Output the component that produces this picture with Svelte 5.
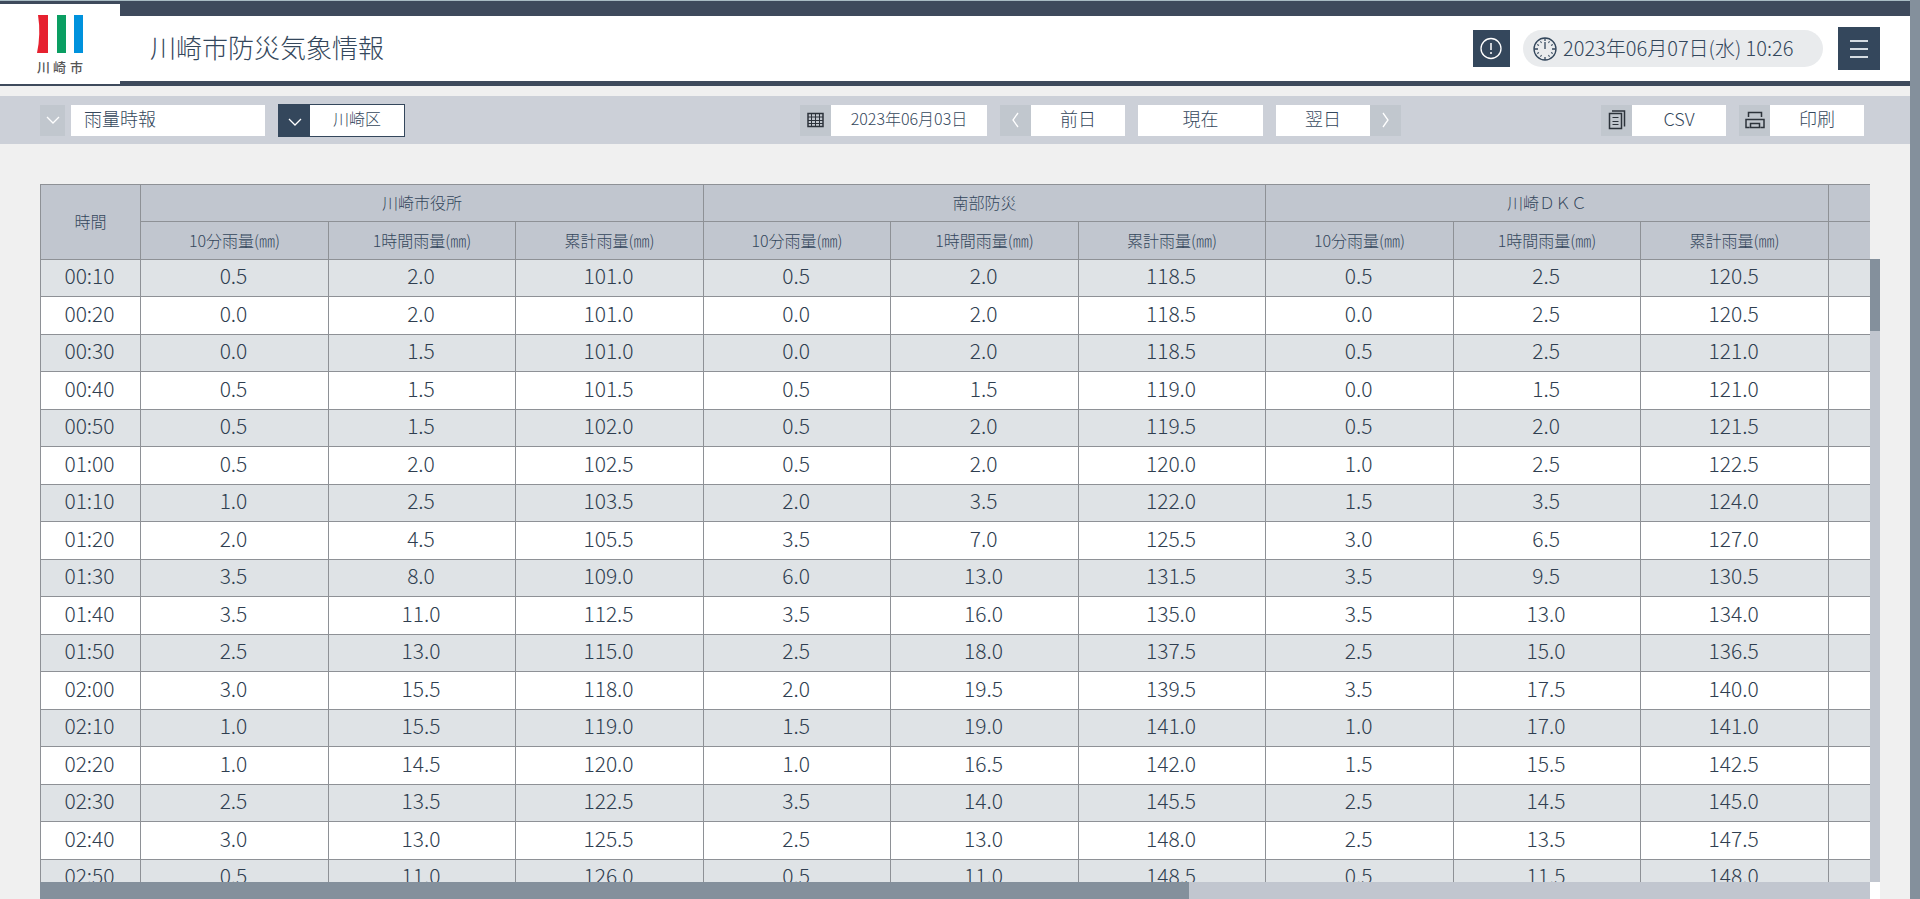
<script>
  let report = "雨量時報";
  let ward = "川崎区";
  let date = "2023年06月03日";

  const stations = ["川崎市役所", "南部防災", "川崎ＤＫＣ"];
  const measures = ["10分雨量(㎜)", "1時間雨量(㎜)", "累計雨量(㎜)"];

  const rows = `
00:10 0.5 2.0 101.0 0.5 2.0 118.5 0.5 2.5 120.5
00:20 0.0 2.0 101.0 0.0 2.0 118.5 0.0 2.5 120.5
00:30 0.0 1.5 101.0 0.0 2.0 118.5 0.5 2.5 121.0
00:40 0.5 1.5 101.5 0.5 1.5 119.0 0.0 1.5 121.0
00:50 0.5 1.5 102.0 0.5 2.0 119.5 0.5 2.0 121.5
01:00 0.5 2.0 102.5 0.5 2.0 120.0 1.0 2.5 122.5
01:10 1.0 2.5 103.5 2.0 3.5 122.0 1.5 3.5 124.0
01:20 2.0 4.5 105.5 3.5 7.0 125.5 3.0 6.5 127.0
01:30 3.5 8.0 109.0 6.0 13.0 131.5 3.5 9.5 130.5
01:40 3.5 11.0 112.5 3.5 16.0 135.0 3.5 13.0 134.0
01:50 2.5 13.0 115.0 2.5 18.0 137.5 2.5 15.0 136.5
02:00 3.0 15.5 118.0 2.0 19.5 139.5 3.5 17.5 140.0
02:10 1.0 15.5 119.0 1.5 19.0 141.0 1.0 17.0 141.0
02:20 1.0 14.5 120.0 1.0 16.5 142.0 1.5 15.5 142.5
02:30 2.5 13.5 122.5 3.5 14.0 145.5 2.5 14.5 145.0
02:40 3.0 13.0 125.5 2.5 13.0 148.0 2.5 13.5 147.5
02:50 0.5 11.0 126.0 0.5 11.0 148.5 0.5 11.5 148.0
`
    .trim()
    .split("\n")
    .map((line) => line.split(" "));

  // minute marks of the clock, skipping the quarters
  const ticks = [30, 60, 120, 150, 210, 240, 300, 330];
</script>

<div class="page">
  <header>
    <a class="logo" href="#top" aria-label="川崎市">
      <svg width="50" height="62" viewBox="0 0 50 62">
        <path d="M3 1H13V39H2Q6 20 3 1Z" fill="#e6212f" />
        <rect x="22" y="1" width="9" height="38" fill="#0a9e62" />
        <rect x="39" y="1" width="9" height="38" fill="#0092dd" />
        <text x="2 18 35" y="58">川崎市</text>
      </svg>
    </a>
    <div class="bar">
      <h1>川崎市防災気象情報</h1>
      <button class="alert" aria-label="alert">
        <svg width="23" height="23" viewBox="0 0 23 23" fill="none" stroke="#fff">
          <circle cx="11" cy="11.5" r="10" stroke-width="1.3" />
          <path d="M11 6v7M11 15v2" stroke-width="1.5" />
        </svg>
      </button>
      <div class="clock">
        <svg width="24" height="24" viewBox="0 0 24 24" fill="none" stroke="#34475c">
          <circle cx="12" cy="12" r="11" stroke-width="1.3" />
          <path d="M12 5v7M12 1v3M12 20v3M1 12h4M19 12h4" stroke-width="1.3" />
          {#each ticks as deg}
            <path d="M12 3v2" transform="rotate({deg} 12 12)" />
          {/each}
        </svg>
        <span>2023年06月07日(水) 10:26</span>
      </div>
      <button class="menu" aria-label="menu"><i></i><i></i><i></i></button>
    </div>
  </header>

  <div class="toolbar">
    <label class="report">
      <span class="icon">
        <svg width="14" height="9" viewBox="0 0 14 9"><path d="M1 1l6 6 6-6" /></svg>
      </span>
      <select bind:value={report} aria-label="帳票">
        <option>雨量時報</option>
      </select>
    </label>
    <label class="ward">
      <span class="icon">
        <svg width="14" height="9" viewBox="0 0 14 9"><path d="M1 1l6 6 6-6" /></svg>
      </span>
      <select bind:value={ward} aria-label="区">
        <option>川崎区</option>
      </select>
    </label>

    <div class="days">
      <label class="date">
        <span class="icon">
          <svg width="17" height="16" viewBox="0 0 17 16" class="dark">
            <path d="M1 1.500h15v13H1z" />
            <path d="M1 5h15M1 8.500h15M1 11.500h15M4.500 2v13M8.500 2v13M12.500 2v13" class="thin" />
          </svg>
        </span>
        <input type="text" bind:value={date} aria-label="日付" />
      </label>
      <button class="tool">
        <span class="icon">
          <svg width="9" height="16" viewBox="0 0 9 16"><path d="M7 1L2 8l5 7" /></svg>
        </span>
        <span class="text">前日</span>
      </button>
      <button class="tool now"><span class="text">現在</span></button>
      <button class="tool">
        <span class="text">翌日</span>
        <span class="icon">
          <svg width="9" height="16" viewBox="0 0 9 16"><path d="M2 1l5 7-5 7" /></svg>
        </span>
      </button>
    </div>

    <div class="output">
      <button class="tool">
        <span class="icon">
          <svg width="18" height="20" viewBox="0 0 18 20" class="dark">
            <path d="M1.500 3.500h12v15h-12zM4 1h12.500v15.500" />
            <path d="M4.500 7.500h6M4.500 11.500h6M4.500 14.500h6" class="thin" />
          </svg>
        </span>
        <span class="text">CSV</span>
      </button>
      <button class="tool">
        <span class="icon">
          <svg width="20" height="18" viewBox="0 0 20 18" class="dark">
            <path d="M3.500 6V1.500h13V6M4.500 16.500h-3.500v-8h18v8h-3.500M5.500 12.500h9v4h-9z" />
          </svg>
        </span>
        <span class="text">印刷</span>
      </button>
    </div>
  </div>

  <main>
    <div class="sheet">
      <table>
        <colgroup>
          <col class="time" />
          {#each rows[0].slice(1) as _, i}
            <col class={i % 2 ? "odd" : "even"} />
          {/each}
          <col />
        </colgroup>
        <thead>
          <tr>
            <th rowspan="2">時間</th>
            {#each stations as station}
              <th colspan="3">{station}</th>
            {/each}
            <th></th>
          </tr>
          <tr>
            {#each stations as _}
              {#each measures as measure}
                <th>{measure}</th>
              {/each}
            {/each}
            <th></th>
          </tr>
        </thead>
        <tbody>
          {#each rows as row}
            <tr>
              {#each row as cell}
                <td>{cell}</td>
              {/each}
              <td></td>
            </tr>
          {/each}
        </tbody>
      </table>
    </div>
    <div class="vbar"><div class="thumb"></div></div>
    <div class="hbar"><div class="thumb"></div></div>
    <div class="corner"></div>
  </main>
</div>

<style>
  :global(body) {
    background: #f0f0f0;
    overflow: hidden;
  }

  * {
    box-sizing: border-box;
  }

  .page {
    height: 100vh;
    display: flex;
    flex-direction: column;
    border-right: 10px solid #84909c;
    color: #34475c;
    font-family: "Noto Sans CJK JP", sans-serif;
    font-weight: 300;
  }

  button,
  input,
  select {
    margin: 0;
    padding: 0;
    border: 0;
    border-radius: 0;
    color: inherit;
    font: inherit;
  }

  header {
    flex: none;
    display: flex;
    height: 86px;
    background: #3e4a5c;
    border-top: 1px solid #a9bcc4;
  }

  .logo {
    display: flex;
    justify-content: center;
    width: 120px;
    height: 80px;
    margin-top: 3px;
    padding-top: 10px;
    background: #fff;
  }

  .logo text {
    font-size: 13px;
    font-weight: 500;
    fill: #555;
  }

  .bar {
    flex: 1;
    display: flex;
    align-items: center;
    height: 65px;
    margin-top: 15px;
    padding: 0 30px;
    background: #fff;
  }

  h1 {
    flex: 1;
    margin: 0;
    padding-bottom: 4px;
    font-size: 26px;
    font-weight: 300;
    line-height: 40px;
  }

  .alert,
  .menu {
    display: flex;
    align-items: center;
    justify-content: center;
    background: #34475c;
  }

  .alert {
    width: 37px;
    height: 37px;
  }

  .clock {
    display: flex;
    align-items: center;
    gap: 6px;
    width: 300px;
    height: 37px;
    margin: 0 15px 0 13px;
    padding-left: 10px;
    border-radius: 19px;
    background: #e9ebed;
    font-size: 20px;
    line-height: 28px;
  }

  .clock span {
    padding-bottom: 2px;
  }

  .menu {
    flex-direction: column;
    gap: 6px;
    width: 42px;
    height: 43px;
  }

  .menu i {
    width: 18px;
    height: 2px;
    background: #d5dce2;
  }

  .toolbar {
    flex: none;
    display: flex;
    align-items: center;
    height: 48px;
    margin-top: 10px;
    padding: 0 46px 0 40px;
    background: #ccd0d8;
    font-size: 18px;
  }

  label,
  .tool {
    display: flex;
    height: 31px;
  }

  .icon {
    display: flex;
    align-items: center;
    justify-content: center;
    width: 31px;
    height: 100%;
    background: #c1c7ce;
  }

  .icon svg {
    fill: none;
    stroke: #fff;
    stroke-width: 1.3;
  }

  .icon .dark {
    stroke: #2c333b;
    stroke-width: 1.5;
  }

  .icon .thin {
    stroke-width: 1;
  }

  select,
  input {
    padding-bottom: 4px;
    background: #fff;
  }

  select {
    appearance: none;
  }

  .report {
    gap: 6px;
  }

  .report .icon {
    width: 25px;
  }

  .report select {
    width: 194px;
    padding-left: 13px;
  }

  .ward {
    height: 33px;
    margin-left: 13px;
    border: 1px solid #34475c;
    background: #34475c;
    font-size: 16px;
  }

  .ward .icon {
    padding-top: 4px;
    background: #34475c;
  }

  .ward select {
    width: 94px;
    text-align-last: center;
  }

  .days {
    display: flex;
    gap: 13px;
    margin: 0 200px 0 auto;
  }

  .date input {
    width: 156px;
    font-size: 16px;
    text-align: center;
  }

  .tool {
    background: #fff;
    line-height: 27px;
  }

  .text {
    width: 94px;
    text-align: center;
  }

  .now .text {
    width: 125px;
  }

  .output {
    display: flex;
    gap: 13px;
  }

  main {
    flex: 1;
    display: grid;
    grid-template-columns: minmax(0, 1fr) 10px;
    grid-template-rows: 75px minmax(0, 1fr) 17px;
    min-height: 0;
    margin: 40px 30px 0 40px;
  }

  .sheet {
    grid-row: 1 / 3;
    overflow: hidden;
  }

  table {
    width: 100%;
    table-layout: fixed;
    border-spacing: 0;
  }

  .time {
    width: 100px;
  }

  .even {
    width: 188px;
  }

  .odd {
    width: 187px;
  }

  tr:nth-child(odd) {
    height: 37px;
  }

  tr:nth-child(even) {
    height: 38px;
  }

  th,
  td {
    padding: 0;
    border-top: 1px solid #8e9196;
    border-left: 1px solid #8e9196;
    text-align: center;
  }

  th {
    padding-bottom: 2px;
    background: #c1c6cf;
    font-size: 16px;
    font-weight: 300;
    line-height: 24px;
  }

  td {
    padding: 0 2px 6px 0;
    background: #fff;
    color: #2f3e50;
    font-size: 21px;
    line-height: 28px;
  }

  tbody tr:nth-child(odd) td {
    background: #dfe3e6;
  }

  .vbar {
    grid-area: 2 / 2;
    background: #c1c6cf;
  }

  .vbar .thumb {
    height: 72px;
  }

  .hbar {
    grid-area: 3 / 1;
    background: #c1c6cf;
  }

  .hbar .thumb {
    width: 62.8%;
    height: 100%;
  }

  .thumb {
    background: #84909c;
  }

  .corner {
    grid-area: 3 / 2;
    background: #fff;
  }
</style>
